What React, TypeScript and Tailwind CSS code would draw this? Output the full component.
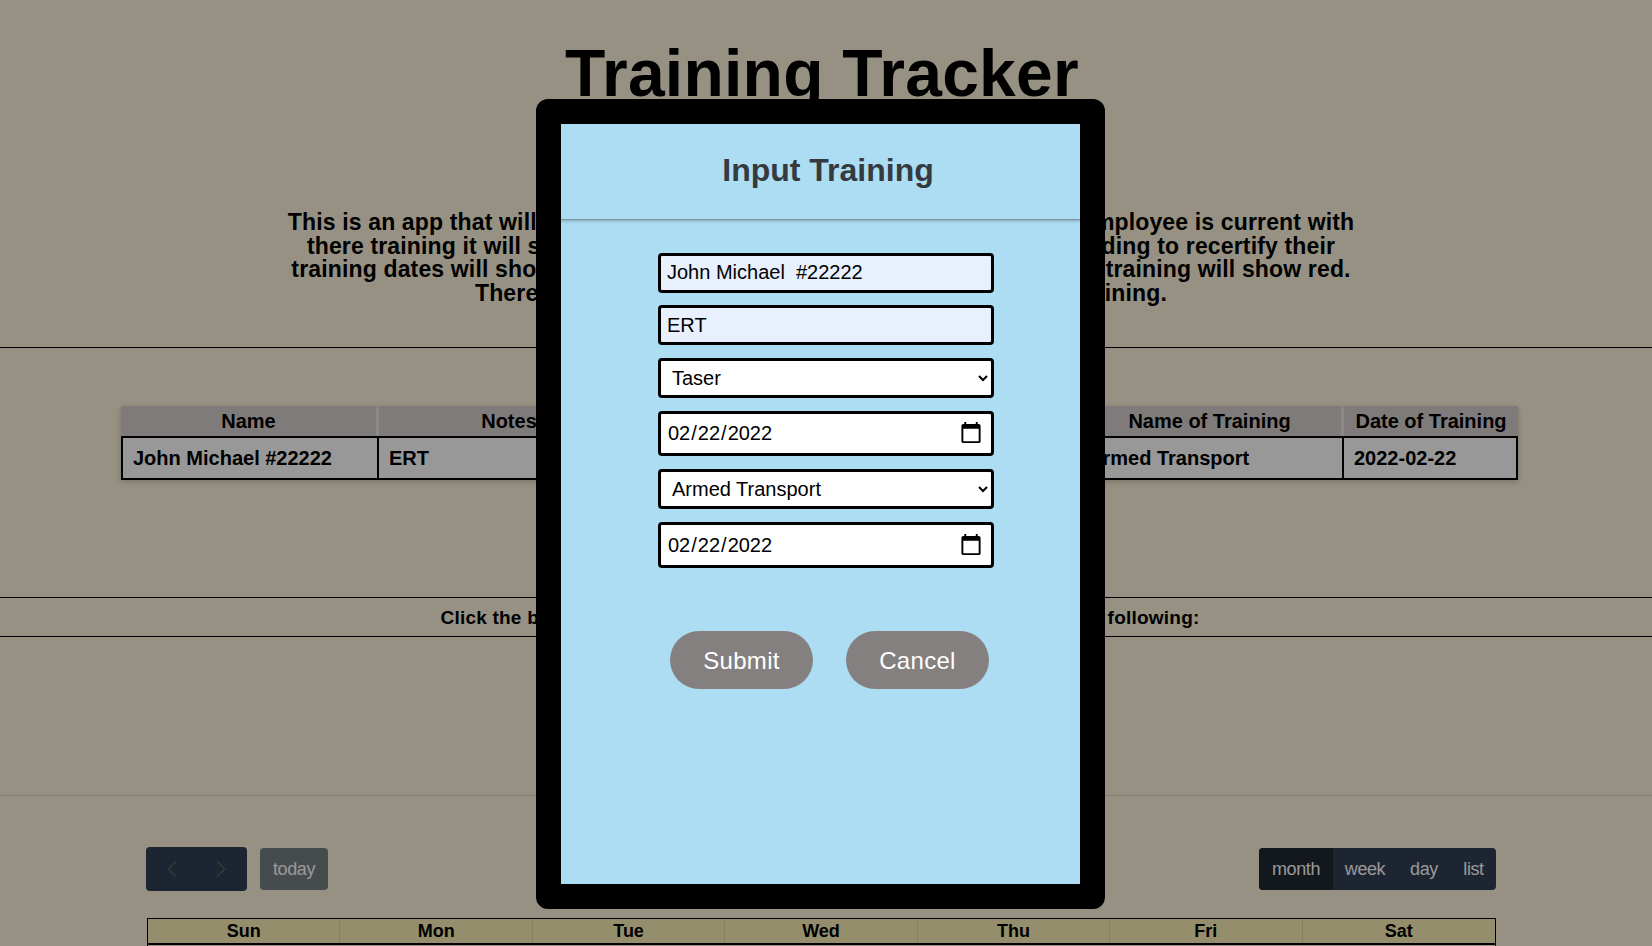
import { ChevronLeft, ChevronRight } from "lucide-react";

const days = ["Sun", "Mon", "Tue", "Wed", "Thu", "Fri", "Sat"];
const columns = [
  { head: "Name", value: "John Michael #22222", width: "w-[258px]" },
  { head: "Notes", value: "ERT", width: "w-[263px]" },
  { head: "Name of Training", value: "Taser", width: "w-[264px]" },
  { head: "Date of Training", value: "2022-02-22", width: "w-[172px]" },
  { head: "Name of Training", value: "Armed Transport", width: "w-[266px]" },
  { head: "Date of Training", value: "2022-02-22", width: "w-[174px]" },
];

const fieldClass =
  "block w-[336px] rounded-[4px] border-[3px] border-black text-[20px] text-black outline-none";
const dateClass =
  "bg-white pr-[8px] pl-[6px] [&::-webkit-calendar-picker-indicator]:h-[24px] [&::-webkit-calendar-picker-indicator]:w-[24px] [&::-webkit-calendar-picker-indicator]:p-0";

function Page() {
  return (
    <div className="h-[946px] overflow-hidden bg-[#faf2da] text-black">
      <h1 className="pt-[36px] pr-[8px] text-center text-[66px] font-bold leading-[74px] tracking-[0.25px]">
        Training Tracker
      </h1>
      <p className="mt-[101px] pr-[10px] text-center text-[23px] font-bold leading-[23.5px] tracking-[0.15px]">
        This is an app that will show employee training status for a group. If an employee is current with
        <br />
        there training it will show as green, but if that employee is currently needing to recertify their
        <br />
        training dates will show yellow, and all of the employees with the expired training will show red.
        <br />
        There is a table shown below to input any employee's training.
      </p>
      <hr className="mt-[42px] border-t border-black" />

      <table className="mt-[58px] ml-[121px] table-fixed border-separate border-spacing-0 text-[20px] shadow-[0_2px_6px_rgba(0,0,0,0.2)]">
        <thead>
          <tr>
            {columns.map((c, i) => (
              <th
                key={i}
                className={`${c.width} h-[30px] border-r-[3px] border-[#e8e4e0] bg-[#d4cdcd] font-bold last:border-r-0`}
              >
                {c.head}
              </th>
            ))}
          </tr>
        </thead>
        <tbody>
          <tr>
            {columns.map((c, i) => (
              <td
                key={i}
                className="h-[44px] border-y-2 border-r-2 border-black bg-[#fdfdfd] px-[10px] font-bold first:border-l-2"
              >
                {c.value}
              </td>
            ))}
          </tr>
        </tbody>
      </table>

      <div className="mt-[117px] border-y border-black pt-[9px] pr-[12px] pb-[7px] text-center text-[19px] font-bold leading-[22px] tracking-[0.22px]">
        Click the button below to add new employee training or to do any of the following:
      </div>
      <hr className="mt-[158px] border-t border-[#d8cfc0]" />

      <div className="mt-[51px] mr-[156px] ml-[146px]">
        <div className="flex items-center justify-between">
          <div className="flex items-center gap-[13px]">
            <div className="flex h-[44px] w-[101px] items-center justify-center gap-[19px] rounded-[4px] bg-[#2f3e52] text-[#4d6a58]">
              <ChevronLeft size={30} strokeWidth={1} />
              <ChevronRight size={30} strokeWidth={1} />
            </div>
            <button className="h-[42px] w-[68px] rounded-[4px] bg-[#757d81] pt-[1px] text-[18px] tracking-[-0.4px] text-[#fdfdfd]">
              today
            </button>
          </div>
          <div className="flex h-[42px] overflow-hidden rounded-[4px] bg-[#2f3e52] text-[18px] tracking-[-0.4px] text-[#fdfdfd]">
            <span className="flex w-[74px] items-center justify-center bg-[#1e2833]">month</span>
            <span className="flex w-[64px] items-center justify-center">week</span>
            <span className="flex w-[54px] items-center justify-center">day</span>
            <span className="flex w-[45px] items-center justify-center">list</span>
          </div>
        </div>
        <div className="mt-[27px] ml-[1px] grid grid-cols-7 border border-black bg-[#f7edb4] text-center text-[18px] font-bold leading-[24px]">
          {days.map((d) => (
            <div key={d} className="border-r border-[#e0d6a0] last:border-r-0">
              {d}
            </div>
          ))}
        </div>
        <div className="ml-[1px] h-[40px] border border-black" />
      </div>
    </div>
  );
}

function Modal() {
  return (
    <div className="absolute top-[99px] left-[536px] h-[810px] w-[569px] rounded-[12px] border-[25px] border-black bg-[#acddf2]">
      <div className="flex h-[96px] items-center justify-center border-b border-[#7f929c] pb-[3px] pl-[15px] shadow-[0_1px_3px_rgba(0,0,0,0.25)]">
        <h2 className="text-[32px] font-bold text-[#343a40]">Input Training</h2>
      </div>
      <div className="flex flex-col gap-[13px] pt-[33px] pl-[97px]">
        <input
          className={`${fieldClass} h-[40px] bg-[#e8f0fe] px-[6px] pb-[1px]`}
          defaultValue="John Michael  #22222"
        />
        <input className={`${fieldClass} mt-[-1px] h-[40px] bg-[#e8f0fe] px-[6px]`} defaultValue="ERT" />
        <select className={`${fieldClass} h-[40px] bg-white pr-[4px] pl-[7px]`} defaultValue="Taser">
          <option>Taser</option>
        </select>
        <input className={`${fieldClass} ${dateClass} h-[45px] pb-[1px]`} type="date" defaultValue="2022-02-22" />
        <select className={`${fieldClass} h-[40px] bg-white pr-[4px] pl-[7px]`} defaultValue="Armed Transport">
          <option>Armed Transport</option>
        </select>
        <input className={`${fieldClass} ${dateClass} h-[46px]`} type="date" defaultValue="2022-02-22" />
      </div>
      <div className="flex gap-[33px] pt-[63px] pl-[109px]">
        <button className="h-[58px] w-[143px] rounded-full bg-[#848080] pt-[2px] text-[24px] tracking-[0.3px] text-white">
          Submit
        </button>
        <button className="h-[58px] w-[143px] rounded-full bg-[#848080] pt-[2px] text-[24px] tracking-[0.3px] text-white">
          Cancel
        </button>
      </div>
    </div>
  );
}

export default function App() {
  return (
    <div className="relative h-[946px] overflow-hidden font-['Liberation_Sans',Arial,sans-serif]">
      <Page />
      <div className="absolute inset-0 bg-black/40" />
      <Modal />
    </div>
  );
}
